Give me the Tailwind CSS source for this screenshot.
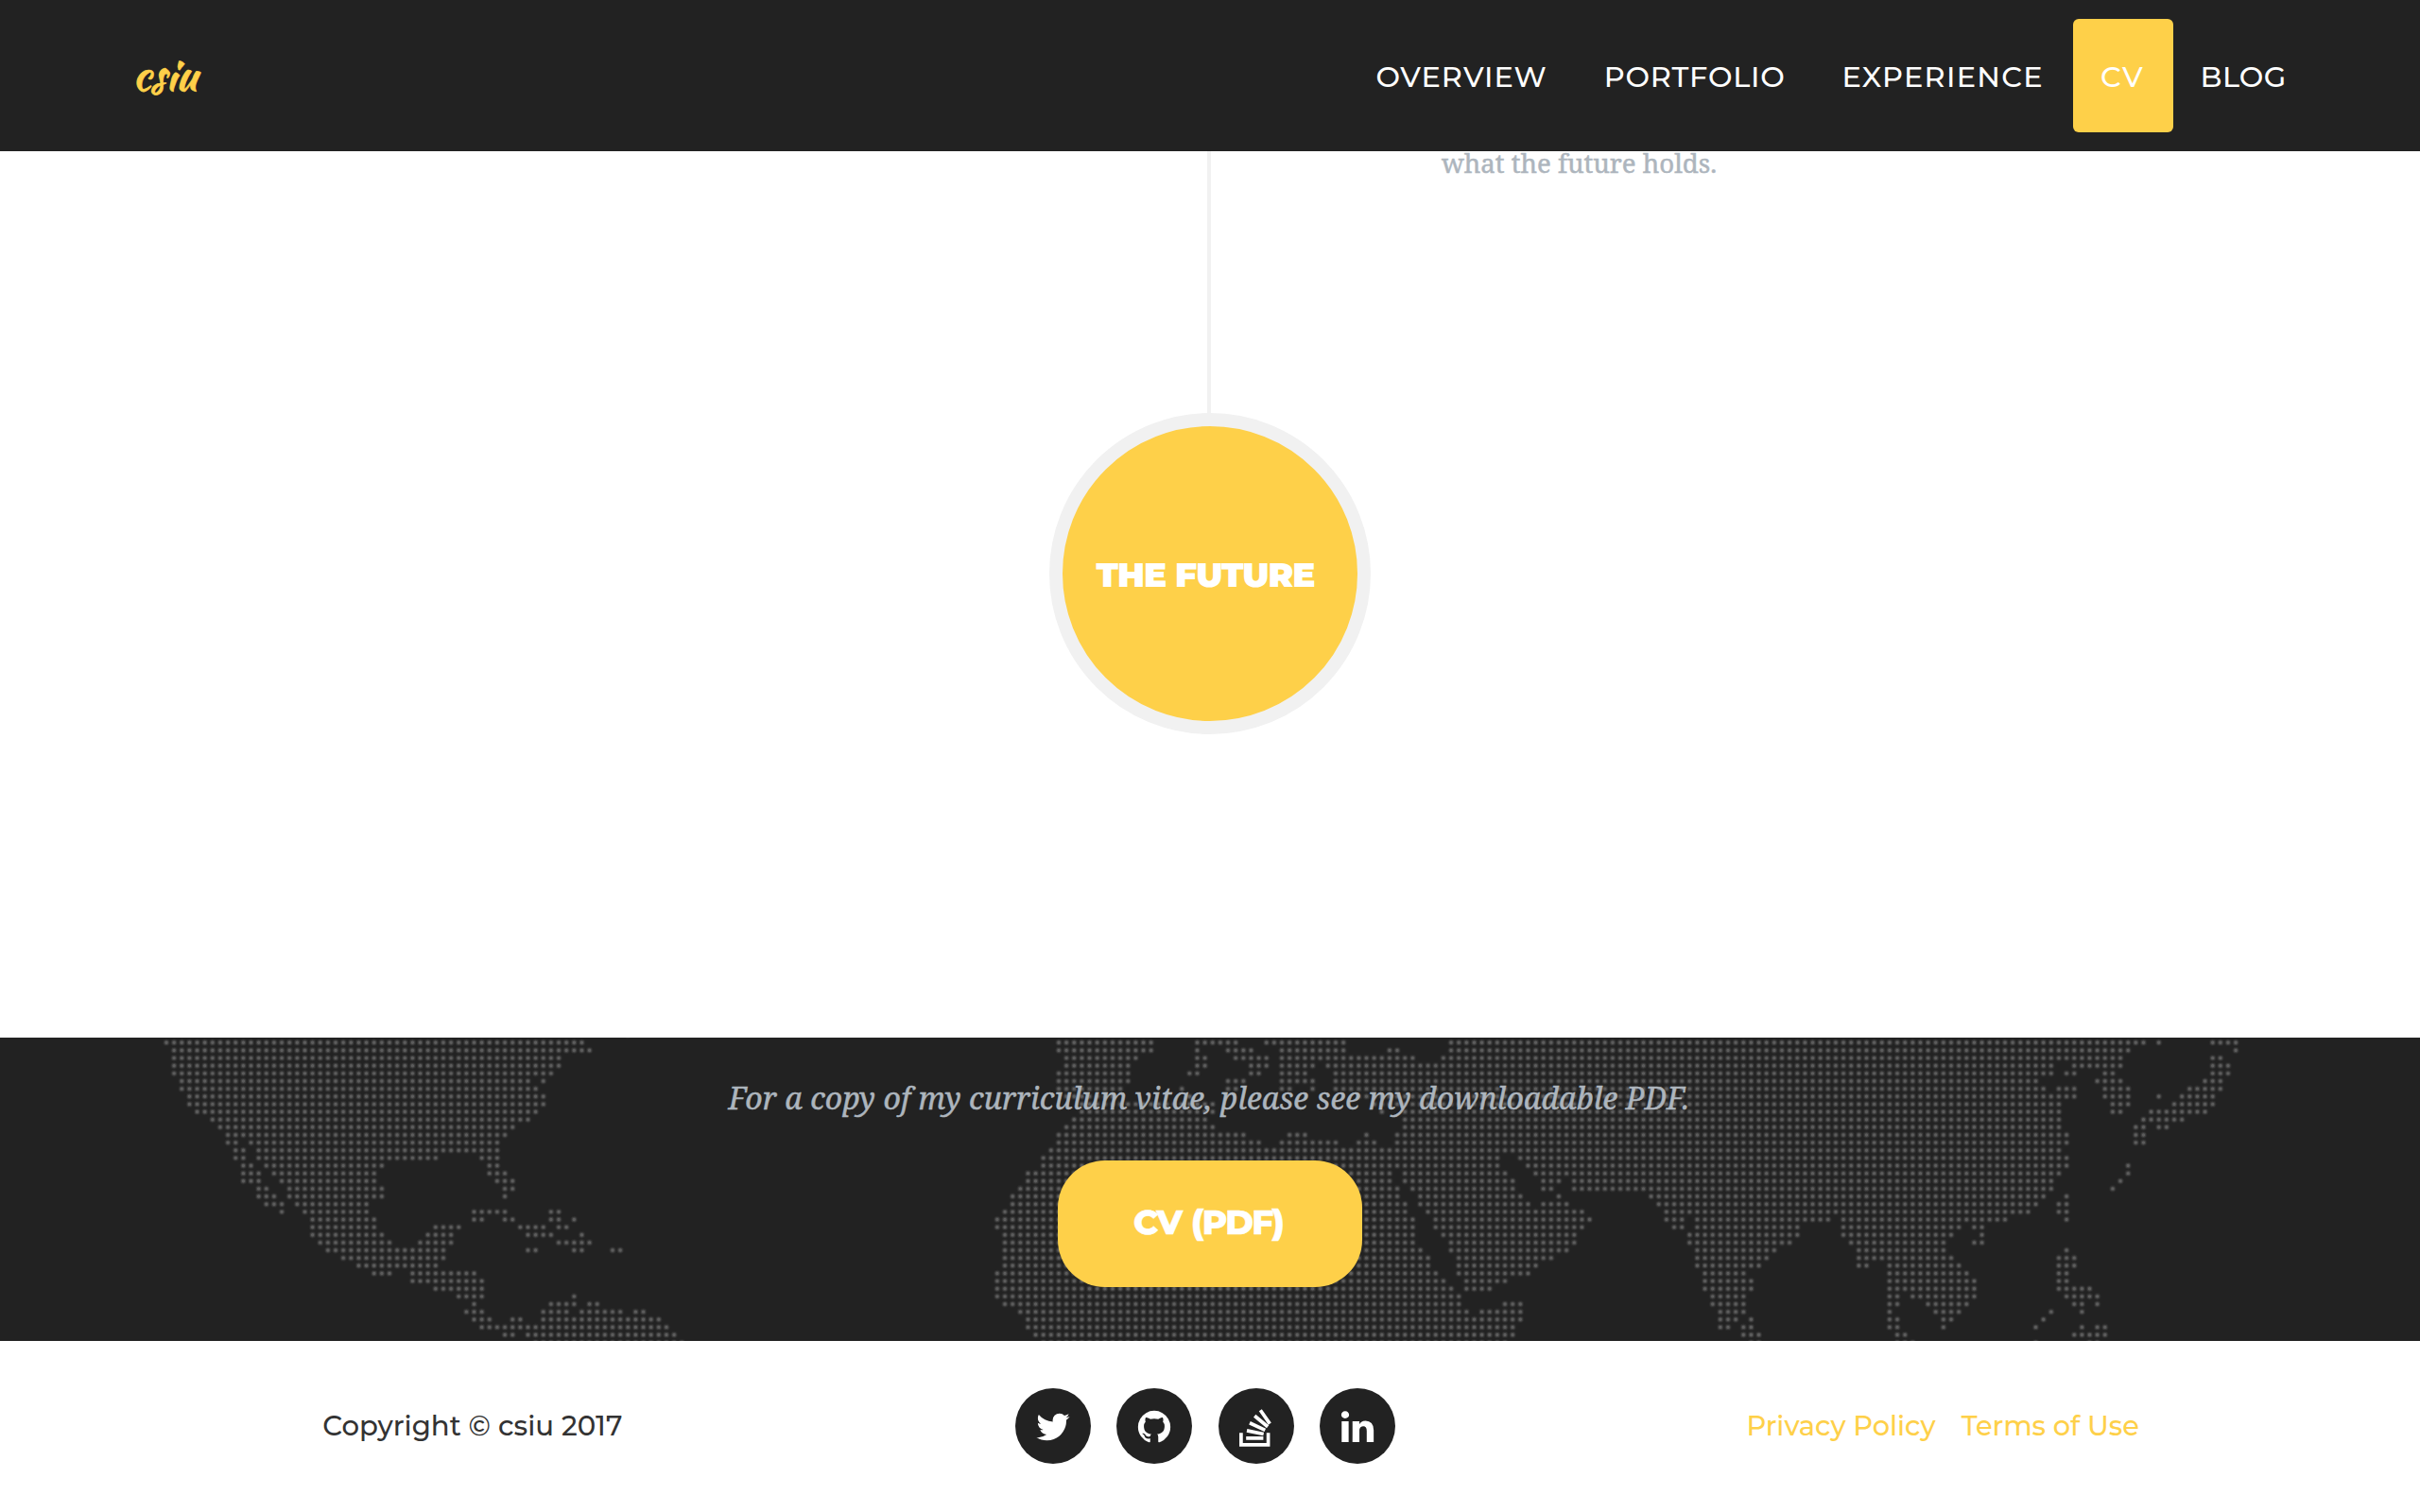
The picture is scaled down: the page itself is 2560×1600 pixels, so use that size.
<!DOCTYPE html>
<html lang="en">
<head>
<meta charset="utf-8">
<title>csiu</title>
<script src="https://cdn.jsdelivr.net/npm/@tailwindcss/browser@4"></script>
</head>
<body class="flex h-[1600px] w-[2560px] flex-col overflow-hidden bg-white font-['Montserrat',sans-serif]">

<nav class="flex h-[160px] shrink-0 items-center justify-between bg-[#222222] pr-[111px] pl-[140px]">
  <a class="pr-1 font-['Kaushan_Script',cursive] text-[46px] leading-none text-[#fed049] [-webkit-text-stroke:0.7px_#fed049]">csiu</a>
  <ul class="flex items-center text-[30.4px] leading-[43px] font-medium text-white">
    <li class="flex h-[120px] w-[241px] items-center pt-[2px] pl-[28.4px] tracking-[1px]">OVERVIEW</li>
    <li class="flex h-[120px] w-[252px] items-center pt-[2px] pl-[28.8px] tracking-[0.8px]">PORTFOLIO</li>
    <li class="flex h-[120px] w-[273px] items-center pt-[2px] pl-[28.4px] tracking-[1.3px]">EXPERIENCE</li>
    <li class="flex h-[120px] w-[106px] items-center rounded-[6px] bg-[#fed049] pt-[2px] pl-[29px] tracking-[1.6px]">CV</li>
    <li class="flex h-[120px] w-[150px] items-center pt-[2px] pl-[28.6px] tracking-[0.3px]">BLOG</li>
  </ul>
</nav>

<main class="flex h-[938px] shrink-0 flex-col">
  <div class="flex h-[277px]">
    <div class="ml-[1277px] w-1 bg-[#f1f1f1]"></div>
    <p class="-mt-[8px] ml-[244px] font-['Roboto_Slab','Noto_Serif',serif] text-[27.6px] leading-[40px] text-[#adb5bd] [-webkit-text-stroke:0.5px_#adb5bd]">what the future holds.</p>
  </div>
  <div class="mx-auto flex size-[340px] items-center justify-center rounded-full border-[14px] border-[#f1f1f1] bg-[#fed049]">
    <h4 class="mr-[10px] pt-[1px] text-[36px] leading-none font-black tracking-[-0.95px] whitespace-nowrap text-white">THE FUTURE</h4>
  </div>
</main>

<section class="relative h-[321px] shrink-0 bg-[#222222]">
  <svg class="absolute inset-0 size-full" viewBox="0 0 2560 321" fill="none" stroke-linecap="round">
    <path class="dots" stroke="#2b2b2b" stroke-width="7.6"/>
    <path class="dots" stroke="#3f3f3f" stroke-width="5.4"/>
    <path class="dots" stroke="#5c5c5c" stroke-width="3.4"/>
  </svg>
  <div class="relative flex flex-col items-center">
    <p class="mt-[41px] pr-[2px] text-center font-['Noto_Serif',serif] text-[32px] leading-[46px] tracking-[0.07px] text-[#adb5bd] italic [-webkit-text-stroke:0.5px_#adb5bd]">For a copy of my curriculum vitae, please see my downloadable PDF.</p>
    <a class="mt-[43px] flex h-[134px] w-[322px] items-center justify-center rounded-[50px] bg-[#fed049] pr-[4px] pb-[4px] text-[36px] leading-none font-extrabold tracking-[-1.7px] text-white [-webkit-text-stroke:0.5px_white] [word-spacing:2px]">CV (PDF)</a>
  </div>
</section>

<footer class="grid h-[180px] shrink-0 grid-cols-3 items-center px-[112px] text-center text-[29px] leading-[80px] font-medium">
  <p class="pr-[3px] text-[29.2px] text-[#333333]">Copyright © csiu 2017</p>
  <div class="flex justify-center gap-[27.4px] pr-[10px]">
    <a class="flex size-20 items-center justify-center rounded-full bg-[#222222] pt-[2px] text-white">
      <svg class="size-10" viewBox="0 0 1792 1792" fill="currentColor"><path d="M1684 408q-67 98-162 167 1 14 1 42 0 130-38 259.5t-115.5 248.5-184.5 210.5-258 146-323 54.5q-271 0-496-145 35 4 78 4 225 0 401-138-105-2-188-64.500t-114-159.500q33 5 61 5 43 0 85-11-112-23-185.500-111.500t-73.500-205.500v-4q68 38 146 41-66-44-105-115t-39-154q0-88 44-163 121 149 294.500 238.500t371.500 99.500q-8-38-8-74 0-134 94.500-228.500t228.500-94.500q140 0 236 102 109-21 205-78-37 115-142 178 93-10 186-50z"/></svg>
    </a>
    <a class="flex size-20 items-center justify-center rounded-full bg-[#222222] pt-[2px] text-white">
      <svg class="size-10" viewBox="0 0 1792 1792" fill="currentColor"><path d="M896 128q209 0 385.500 103t279.500 279.500 103 385.500q0 251-146.500 451.500t-378.500 277.500q-27 5-40-7t-13-30q0-3 .5-76.500t.5-134.500q0-97-52-142 57-6 102.500-18t94-39 81-66.500 53-105 20.500-150.500q0-119-79-206 37-91-8-204-28-9-81 11t-92 44l-38 24q-93-26-192-26t-192 26q-16-11-42.500-27t-83.500-38.500-85-13.500q-45 113-8 204-79 87-79 206 0 85 20.500 150t52.500 105 80.500 67 94 39 102.500 18q-39 36-49 103-21 10-45 15t-57 5-65.500-21.500-55.500-62.500q-19-32-48.500-52t-49.500-24l-20-3q-21 0-29 4.500t-5 11.500 9 14 13 12l7 5q22 10 43.500 38t31.500 51l10 23q13 38 44 61.500t67 30 69.500 7 55.500-3.500l23-4q0 38 .5 88.500t.5 54.500q0 18-13 30t-40 7q-232-77-378.500-277.500t-146.500-451.500q0-209 103-385.500t279.500-279.500 385.500-103z"/></svg>
    </a>
    <a class="flex size-20 items-center justify-center rounded-full bg-[#222222] text-white">
      <svg class="size-20" viewBox="0 0 80 80" fill="none" stroke="currentColor" stroke-width="3.700">
        <path d="M23.900 47.200v12.700h28.700V47.200M29.200 52.900h18.200M30 44.900l17.700 3.600M33 36.800l16.300 7.600M38.200 29.300l13.900 11.500M44.300 23.200l10 14.400"/>
      </svg>
    </a>
    <a class="flex size-20 items-center justify-center rounded-full bg-[#222222] pt-[2px] text-white">
      <svg class="size-10" viewBox="0 0 1792 1792" fill="currentColor"><path d="M477 625v991h-330v-991h330zm21-306q1 73-50.500 122t-135.500 49h-2q-82 0-132-49t-50-122q0-74 51.500-122.500t134.500-48.500 133 48.500 51 122.500zm1166 729v568h-329v-530q0-105-40.500-164.500t-126.500-59.500q-63 0-105.500 34.500t-63.500 85.500q-11 30-11 81v553h-329q2-399 2-647t-1-296l-1-48h329v144h-2q20-32 41-56t56.500-52 87-43.500 114.500-15.500q171 0 275 113.500t104 332.500z"/></svg>
    </a>
  </div>
  <p class="flex justify-center gap-[27px] pr-[7px] text-[28.8px] text-[#fed049]"><a>Privacy Policy</a><a>Terms of Use</a></p>
</footer>

<script>
// Dotted world map: one line per row, each a list of filled column runs.
const rows = `60
0-54 116-128 134-139 143-153 167-257 259 266-269
1-55 116-128 134 138-141 145-153 159-160 167-255 269
1-51 117-126 134-135 139-143 145-162 166-254 266-267
1-51 117-125 134-135 141-143 145-149 151-245 248-254 266-268
1-50 116-125 133-134 141-142 145-148 152-245 247-248 252-253 266-268
2-47 49 116-125 138-140 145-149 152-243 251-254 265-267
2-48 116-124 132 138-139 145-146 149 152-244 246-248 252-255 263-267
3-49 117-123 133 155-248 252-255 259 262-266
3-49 119-136 157-246 253-255 261-266
4-48 119-136 158 161-246 253-254 258-265
6-47 118-135 161-246 257-262
7-45 117-136 161-246 256-257 259-260
8-44 116-140 146-148 156 160-247 256-257
8-9 11-43 116-142 145-152 155-157 160-247 256-257
9-10 12-43 115-246
9-10 12-35 41-43 114-173 176-247
10-11 13-28 42-43 114-173 177-247 255
10-12 14-27 42-44 112-159 161-174 178-246 255
10-12 15-27 43-45 112-159 161-175 179-181 183-245 254
12-13 16-28 44-45 111-160 162-175 179-180 183-245 253
12-14 16-28 44 110-160 163-176 181 193-244 247
13-15 17-26 110-161 163-177 179-182 194-243 246-247
15 18-26 40-44 50-51 109-161 164-184 195-242 246-247
19-27 40-41 44-45 50-51 53 108-162 165-185 195-197 199-216 218-239 247
19-27 35-38 46-49 51-52 108-162 165-184 196-197 199-212 218-233 235-236
19-28 34-37 47-50 54 109-162 166-183 198-212 218-232 236
20-29 33-37 51-55 109-162 167-183 198-211 219-231 235-236
21-36 47-48 53-54 58-59 109-163 167-182 199-209 220-231 247
23-36 109-164 168-180 199-208 220-232 246-248
25-35 109-164 168-178 199-207 220-221 224-233 246-248
27-29 32-40 108-165 168-177 200-205 224-234 246-247
32-41 108-166 169-174 200-206 224-235 246-247
35-41 108-167 169-172 200-206 224-235 246-250
38-41 53 108-168 201-205 224-225 227-235 247-251
40 50-53 55-56 109-168 174-176 201-205 224-225 229-234 248-249 251
39-41 49-52 54-59 61-62 111-169 171-176 202-205 224 230-233 245 249
40-42 45-46 49-64 112-176 202-204 206 224-225 231-232 244
41-65 112-175 202-203 205-206 224-225 231 243 249 251-252
44-45 47-66 113-175 205-207 225-226 248-252
48-67 114-174 206-207 225-227 243 250-251`.split("\n");
const pitch = 8.138;
let d = "";
rows.forEach((row, i) => {
  const y = (5.3 + (i - 1) * pitch).toFixed(2);
  for (const run of row.split(" ")) {
    const [a, b = a] = run.split("-").map(Number);
    for (let c = a; c <= b; c++) d += `M${(176 + c * pitch).toFixed(2)} ${y}h0`;
  }
});
document.querySelectorAll(".dots").forEach(p => p.setAttribute("d", d));
</script>
</body>
</html>
